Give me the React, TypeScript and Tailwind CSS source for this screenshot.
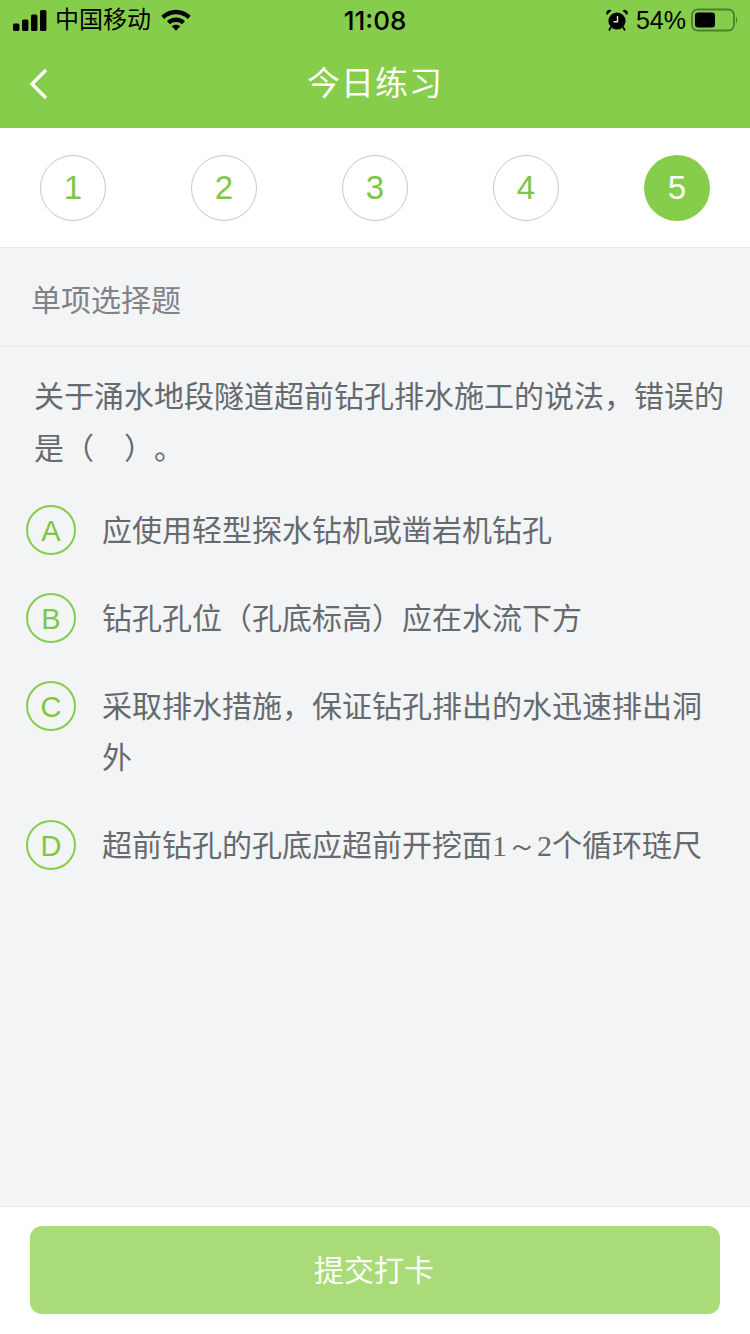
const sans = "font-['Liberation_Sans','Noto_Sans_CJK_SC',sans-serif]";

function Signal() {
  return (
    <svg width="34" height="21" viewBox="0 0 34 21" className="block">
      <rect x="0" y="13.5" width="6.4" height="7.5" rx="1.6" fill="#000" />
      <rect x="9" y="9.5" width="6.4" height="11.5" rx="1.6" fill="#000" />
      <rect x="18" y="4.5" width="6.4" height="16.5" rx="1.6" fill="#000" />
      <rect x="27" y="0" width="6.4" height="21" rx="1.6" fill="#000" />
    </svg>
  );
}

function Wifi() {
  return (
    <svg width="30" height="22" viewBox="0 0 30 22" className="block">
      <path d="M0.3 6.8C8.5 -1.4 21.5 -1.4 29.7 6.8L26.8 10C20.2 3.8 9.8 3.8 3.2 10Z" fill="#000" />
      <path d="M6 12.2C11 7.4 19 7.4 24 12.2L21 15.3C17.7 12.3 12.3 12.3 9 15.3Z" fill="#000" />
      <path d="M10.8 17.2C13.2 15.2 16.8 15.2 19.2 17.2L15 21.8Z" fill="#000" />
    </svg>
  );
}

function Alarm() {
  return (
    <svg width="22" height="22" viewBox="0 0 22 22" className="block">
      <circle cx="11" cy="12" r="8.6" fill="#000" />
      <path d="M1 6 L5.5 1.5 A3.2 3.2 0 0 0 1 6Z M21 6 L16.5 1.5 A3.2 3.2 0 0 1 21 6Z" fill="#000" />
      <path d="M5 18 L3 21.5 M17 18 L19 21.5" stroke="#000" strokeWidth="1.8" />
      <path d="M11.5 7 V12.8 H7.5" stroke="#dfe8d0" strokeWidth="1.4" fill="none" />
    </svg>
  );
}

function Battery() {
  return (
    <svg width="47" height="24" viewBox="0 0 47 24" className="block">
      <rect x="1" y="1.5" width="42" height="21" rx="5.5" fill="none" stroke="#4f7f2c" strokeWidth="1.8" />
      <rect x="4" y="4.5" width="20" height="15" rx="3" fill="#000" />
      <path d="M45 8.5 C46.5 9.5 46.5 14.5 45 15.5Z" fill="#4f7f2c" />
    </svg>
  );
}

function Step({ n, active }: { n: number; active?: boolean }) {
  return (
    <div
      className={
        active
          ? "flex h-[66px] w-[66px] items-center justify-center rounded-full bg-[#86cd4b] text-[33px] text-white"
          : "flex h-[66px] w-[66px] items-center justify-center rounded-full border border-[#c9c9c9] bg-white text-[33px] text-[#7ec648]"
      }
    >
      {n}
    </div>
  );
}

function Option({ label, text }: { label: string; text: React.ReactNode }) {
  return (
    <div className="flex items-start">
      <div className="flex h-[50px] w-[50px] shrink-0 items-center justify-center rounded-full border-2 border-[#86cd4b] pt-[3px] text-[29px] text-[#7ec648]">
        {label}
      </div>
      <div className="ml-[26px] flex-1 text-[30px] leading-[51px] text-[#666a6e]">{text}</div>
    </div>
  );
}

export default function App() {
  return (
    <div className={`flex h-[1334px] w-[750px] flex-col overflow-hidden bg-[#f3f4f6] [text-spacing-trim:space-all] ${sans}`}>
      <div className="h-[128px] shrink-0 bg-[#86cd4b]">
        <div className="relative flex h-[40px] items-center justify-between pl-[13px] pr-[12px] text-black">
          <div className="flex items-center">
            <Signal />
            <span className="ml-[8px] text-[24px] leading-[40px]">中国移动</span>
            <span className="ml-[10px]"><Wifi /></span>
          </div>
          <div className="absolute left-0 right-0 top-0 text-center font-['Inter',sans-serif] text-[26px] font-medium leading-[42px]">11:08</div>
          <div className="flex items-center">
            <Alarm />
            <span className="ml-[8px] mr-[5px] text-[25px] leading-[40px]">54%</span>
            <Battery />
          </div>
        </div>
        <div className="relative flex h-[88px] items-center justify-center">
          <svg width="20" height="32" viewBox="0 0 20 32" className="absolute left-[29px] top-[28px]">
            <path d="M17 2 L3 16 L17 30" fill="none" stroke="#fff" strokeWidth="3.4" />
          </svg>
          <span className="text-[33px] tracking-[1px] text-white">今日练习</span>
        </div>
      </div>

      <div className="flex h-[120px] shrink-0 items-start justify-between border-b border-[#e4e5e7] bg-white px-[40px] pt-[27px]">
        {[1, 2, 3, 4].map((n) => (
          <Step key={n} n={n} />
        ))}
        <Step n={5} active />
      </div>

      <div className="flex h-[99px] shrink-0 items-center border-b border-[#e6e7e9] px-[31px] pt-[6px] text-[30px] text-[#808286]">
        单项选择题
      </div>

      <div className="flex-1 pl-[26px] pr-[24px]">
        <div className="pl-[8px] pt-[24px] text-[30px] leading-[52px] text-[#666a6e]">
          关于涌水地段隧道超前钻孔排水施工的说法，错误的是（　）。
        </div>
        <div className="mt-[30px] flex flex-col gap-[37px]">
          <Option label="A" text="应使用轻型探水钻机或凿岩机钻孔" />
          <Option label="B" text="钻孔孔位（孔底标高）应在水流下方" />
          <Option label="C" text="采取排水措施，保证钻孔排出的水迅速排出洞外" />
          <Option
            label="D"
            text={
              <>
                超前钻孔的孔底应超前开挖面<span className="font-['Liberation_Serif',serif]">1～2</span>个循环琏尺
              </>
            }
          />
        </div>
      </div>

      <div className="h-[128px] shrink-0 border-t border-[#e8e9eb] bg-white px-[30px] pt-[19px]">
        <div className="flex h-[88px] items-center justify-center rounded-[12px] bg-[#a9dc79] pr-[2px] text-[30px] text-white">
          提交打卡
        </div>
      </div>
    </div>
  );
}
